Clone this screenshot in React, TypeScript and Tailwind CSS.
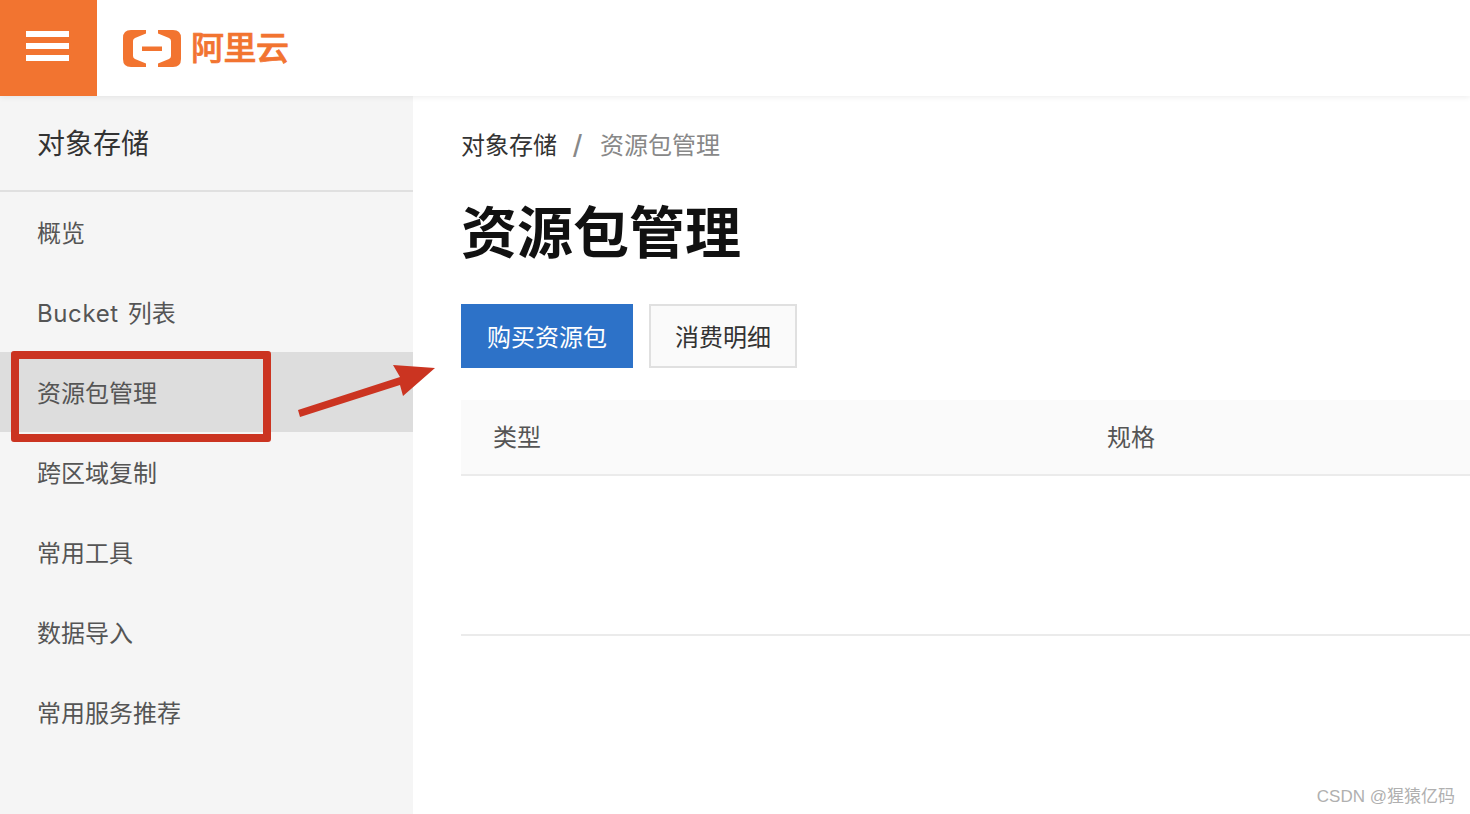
import React from 'react';

const menuItems = ['概览', 'Bucket 列表', '资源包管理', '跨区域复制', '常用工具', '数据导入', '常用服务推荐'];

const AliyunLogo: React.FC = () => (
  <div className="flex items-center gap-[10px]">
    <svg width="58" height="37" viewBox="0 0 58 37" fill="#f27430">
      <path d="M23 0H8Q0 0 0 8V29Q0 37 8 37H23V33.5L12 29Q10 28 10 26V11Q10 9 12 8L23 3.5Z" />
      <path d="M35 0H50Q58 0 58 8V29Q58 37 50 37H35V33.5L46 29Q48 28 48 26V11Q48 9 46 8L35 3.5Z" />
      <rect x="19" y="16.5" width="20" height="4.5" />
    </svg>
    <span className="text-[33px] leading-[37px] font-medium tracking-[-0.5px] text-[#f27430] [-webkit-text-stroke:0.7px_#f27430]">
      阿里云
    </span>
  </div>
);

const App: React.FC = () => {
  return (
    <div className="relative flex h-[814px] flex-col overflow-hidden bg-white font-['Liberation_Sans','Noto_Sans_CJK_SC',sans-serif]">
      {/* Top bar */}
      <header className="z-10 flex h-[96px] shrink-0 items-center bg-white shadow-[0_1px_6px_rgba(0,0,0,0.08)]">
        <div className="flex h-full w-[97px] flex-col items-center justify-center gap-[6px] bg-[#f27430] pb-[4px] pr-[3px]">
          <span className="h-[6px] w-[43px] bg-white" />
          <span className="h-[6px] w-[43px] bg-white" />
          <span className="h-[6px] w-[43px] bg-white" />
        </div>
        <div className="ml-[26px]">
          <AliyunLogo />
        </div>
      </header>

      <div className="flex min-h-0 flex-1">
        {/* Sidebar */}
        <aside className="w-[413px] shrink-0 bg-[#f5f5f5]">
          <div className="flex h-[96px] items-center border-b-2 border-[#e0e0e0] pl-[37px] pt-[4px] text-[28px] text-[#333]">
            对象存储
          </div>
          <nav>
            {menuItems.map((item) => (
              <div
                key={item}
                className={`flex h-[80px] items-center pl-[37px] pt-[4px] text-[24px] text-[#555] ${
                  item === '资源包管理' ? 'bg-[#dddddd] text-[#444]' : ''
                }`}
              >
                {item === 'Bucket 列表' ? (
                  <>
                    <span className="font-['Inter'] text-[24px] tracking-[0.6px]">Bucket</span>
                    <span className="ml-[9px]">列表</span>
                  </>
                ) : (
                  item
                )}
              </div>
            ))}
          </nav>
        </aside>

        {/* Main */}
        <main className="min-w-0 flex-1 pl-[48px]">
          <div className="mt-[33px] flex h-[34px] items-center text-[24px]">
            <span className="text-[#333]">对象存储</span>
            <span className="ml-[16px] mr-[18px] text-[32px] font-light text-[#888]">/</span>
            <span className="text-[#888]">资源包管理</span>
          </div>
          <h1 className="mt-[31px] text-[56px] leading-[80px] font-bold text-[#111]">资源包管理</h1>
          <div className="mt-[30px] flex gap-[16px]">
            <button className="h-[64px] w-[172px] bg-[#2d72c8] pt-[4px] text-[24px] text-white">购买资源包</button>
            <button className="h-[64px] w-[148px] border-2 border-[#e0e0e0] bg-[#fafafa] pt-[3px] text-[24px] text-[#333]">
              消费明细
            </button>
          </div>
          <div className="mt-[32px] flex h-[76px] items-center border-b-2 border-[#ebebeb] bg-[#fafafa] pt-[2px] text-[24px] text-[#555]">
            <div className="w-[646px] pl-[32px]">类型</div>
            <div>规格</div>
          </div>
          <div className="h-[160px] border-b-2 border-[#ebebeb]" />
        </main>
      </div>

      {/* Red annotation */}
      <div className="absolute left-[11px] top-[351px] h-[91px] w-[260px] rounded-[3px] border-8 border-[#cb3421]" />
      <svg className="absolute left-[290px] top-[360px]" width="150" height="60" viewBox="290 360 150 60" fill="#cb3421">
        <path d="M298 410L400 377L393 365L435 368L403 396L400 385L300 417Z" />
      </svg>

      {/* Watermark */}
      <div className="absolute bottom-[5px] right-[15px] text-[17px] text-[#b0b0b0]">CSDN @猩猿亿码</div>
    </div>
  );
};

export default App;
